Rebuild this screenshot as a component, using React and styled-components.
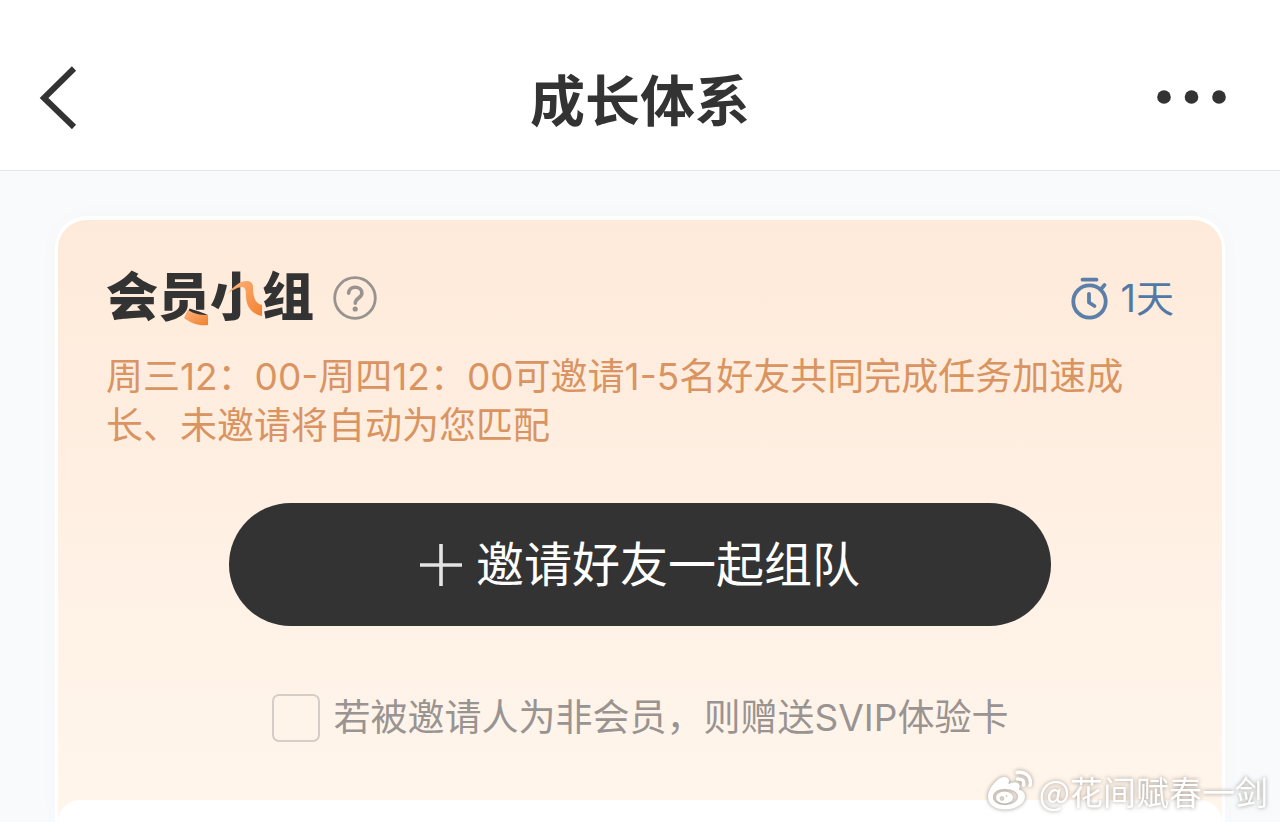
import React from "react";
import styled, { createGlobalStyle } from "styled-components";

const GlobalStyle = createGlobalStyle`
  * {
    box-sizing: border-box;
  }

  body {
    margin: 0;
    background: #f8fafc;
    font-family: Inter, "Noto Sans CJK SC", sans-serif;
    color: #333;
  }

  button {
    padding: 0;
    border: 0;
    background: none;
    color: inherit;
    font: inherit;
    cursor: pointer;
  }
`;

export default function App() {
  return (
    <Page>
      <GlobalStyle />
      <NavBar>
        <IconButton aria-label="返回">
          <svg width="40" height="64" viewBox="0 0 40 64" fill="none">
            <path d="M36 3.500 6 33l30 29" stroke="#333" strokeWidth="6" />
          </svg>
        </IconButton>
        <NavTitle>成长体系</NavTitle>
        <IconButton $end aria-label="更多">
          <svg width="72" height="16" viewBox="0 0 72 16" fill="#333">
            <circle cx="8" cy="8" r="6.8" />
            <circle cx="35.500" cy="8" r="6.8" />
            <circle cx="63" cy="8" r="6.8" />
          </svg>
        </IconButton>
      </NavBar>

      <Main>
        <Card>
          <CardBody>
            <CardHead>
              <GroupTitle>
                会员<Trimmed>小</Trimmed>组
                <TitleStrokes viewBox="0 0 208 60" aria-hidden="true">
                  <defs>
                    <linearGradient id="stroke" x1="0" y1="0" x2="1" y2="1">
                      <stop offset="0" stopColor="#ffb27c" />
                      <stop offset="1" stopColor="#f0822f" />
                    </linearGradient>
                  </defs>
                  <path fill="url(#stroke)" d="M82 42c6 4 12 5 20 5v10c-9 1-16-1-24-7z" />
                  <path fill="url(#stroke)" d="M122 25c6-7 12-12 18-12 5 0 7 2 7 7 0 10 3 16 9 17v11c-10-2-16-9-16-20 0-6-1-9-4-9-4 0-9 3-14 6z" />
                </TitleStrokes>
              </GroupTitle>
              <IconButton aria-label="规则说明">
                <svg width="44" height="44" viewBox="0 0 44 44" fill="none" stroke="#999390">
                  <circle cx="22" cy="22" r="20.3" strokeWidth="2.8" />
                  <path d="M15.600 17.200c.2-3.600 2.900-6 6.600-6s6.700 2.400 6.700 5.700c0 5-6.600 5.200-6.600 10.300" strokeWidth="3.600" strokeLinecap="round" />
                  <circle cx="22.2" cy="33" r="2.6" fill="#999390" stroke="none" />
                </svg>
              </IconButton>
              <Remaining>
                <svg width="38" height="44" viewBox="0 0 38 44" fill="none" stroke="#5b7fa8" strokeLinecap="round">
                  <circle cx="18.5" cy="25.500" r="16.2" strokeWidth="3.8" />
                  <path d="M11.500 3.700h14M30.500 12.500l3-3.500" strokeWidth="3.800" />
                  <path d="M18 18v8.500l5.500 3.500" strokeWidth="3.800" strokeLinejoin="round" />
                </svg>
                1天
              </Remaining>
            </CardHead>

            <Notice>
              周三12：00-周四12：00可邀请1-5名好友共同完成任务加速成长、未邀请将自动为您匹配
            </Notice>

            <InviteButton>
              <svg width="42" height="42" viewBox="0 0 42 42" stroke="#e4e4e4" strokeWidth="3.6">
                <path d="M21 0v42M0 21h42" />
              </svg>
              邀请好友一起组队
            </InviteButton>

            <GiftOption>
              <CheckBox id="gift" type="checkbox" />
              <label htmlFor="gift">若被邀请人为非会员，则赠送SVIP体验卡</label>
            </GiftOption>
          </CardBody>
          <NextPanel />
        </Card>
      </Main>

      <Watermark>
        <svg width="46" height="42" viewBox="0 0 46 42" fill="none">
          <path
            fill="#fff"
            fillRule="evenodd"
            d="M17 7C11 7 1 18 1 27c0 8 8 12.500 17 12.500 11 0 20-6 20-13 0-4-3-6-6-7 1-2.500 1-5-1-6.500-2.500-1.500-6-.5-9.500 1C23 9 21 7 17 7zM18 19c7.500 0 13 3 13 7.500S25.500 35 18 35 6 31.500 6 27s4.500-8 12-8z"
          />
          <ellipse cx="17.500" cy="27.500" rx="8.500" ry="6" fill="#fff" />
          <circle cx="15" cy="28.500" r="2.400" fill="#d6cdc6" />
          <circle cx="19.500" cy="26" r="1" fill="#d6cdc6" />
          <path d="M30 2.500c9-1.500 15 5 13 13M30.500 9c4.500-.5 7 2 6 6" stroke="#fff" strokeWidth="3.400" strokeLinecap="round" />
        </svg>
        @花间赋春一剑
      </Watermark>
    </Page>
  );
}

const Page = styled.div`
  position: relative;
  display: flex;
  flex-direction: column;
  min-height: 100vh;
`;

const NavBar = styled.header`
  display: grid;
  grid-template-columns: 1fr auto 1fr;
  align-items: center;
  padding: 24px 38px 0;
  height: 171px;
  background: #fff;
  border-bottom: 1px solid #e2e4e6;
`;

const NavTitle = styled.h1`
  margin: 0;
  font-family: "Noto Sans CJK SC", sans-serif;
  font-size: 55px;
  line-height: 80px;
  font-weight: 700;
`;

const IconButton = styled.button`
  display: flex;
  justify-self: ${props => (props.$end ? "end" : "start")};
  margin-right: ${props => (props.$end ? "14px" : "0")};
`;

const Main = styled.main`
  flex: 1;
  display: flex;
  padding: 45px 55px 0;
`;

const Card = styled.section`
  flex: 1;
  display: flex;
  flex-direction: column;
  border: 3px solid #fff;
  border-top-width: 4px;
  border-bottom: 0;
  border-radius: 32px 32px 0 0;
  background: linear-gradient(#feeada, #fff5eb 560px);
  box-shadow: 0 0 24px rgba(60, 70, 90, 0.02);
`;

const CardBody = styled.div`
  display: flex;
  flex-direction: column;
  padding: 48px 48px 58px;
`;

const CardHead = styled.div`
  display: flex;
  align-items: center;
  gap: 19px;
  height: 60px;
`;

const GroupTitle = styled.h2`
  position: relative;
  display: flex;
  margin: 0;
  font-size: 52px;
  line-height: 60px;
  font-weight: 900;
`;

/* leaves the right stroke out, TitleStrokes draws it in orange */
const Trimmed = styled.span`
  color: transparent;
  background: linear-gradient(90deg, #333 64%, transparent 64%);
  background-clip: text;
`;

const TitleStrokes = styled.svg`
  position: absolute;
  inset: 0;
  width: 100%;
  height: 100%;
`;

const Remaining = styled.span`
  display: flex;
  align-items: center;
  gap: 12px;
  margin-left: auto;
  color: #5079a6;
  font-size: 38px;
  line-height: 60px;
`;

const Notice = styled.p`
  margin: 24px 0 0;
  padding-right: 24px;
  color: #d99461;
  font-size: 37px;
  line-height: 49px;
`;

const InviteButton = styled.button`
  && {
    display: flex;
    align-items: center;
    justify-content: center;
    gap: 14px;
    align-self: center;
    width: 77%;
    height: 123px;
    margin-top: 53px;
    border-radius: 62px;
    background: #333;
    color: #fff;
    font-size: 48px;
    line-height: 60px;
  }
`;

const GiftOption = styled.div`
  display: flex;
  align-items: center;
  justify-content: center;
  gap: 14px;
  margin-top: 68px;
  color: #999492;
  font-size: 37px;
  line-height: 48px;
`;

const CheckBox = styled.input`
  appearance: none;
  width: 48px;
  height: 48px;
  margin: 0;
  border: 2px solid #d5cdc8;
  border-radius: 7px;

  &:checked {
    background: #333;
  }
`;

const NextPanel = styled.div`
  flex: 1;
  min-height: 22px;
  border-radius: 28px 28px 0 0;
  background: #fff;
`;

const Watermark = styled.div`
  position: absolute;
  right: 12px;
  bottom: 10px;
  display: flex;
  align-items: center;
  gap: 6px;
  color: #fff;
  font-family: "Noto Sans CJK SC", sans-serif;
  font-size: 33px;
  line-height: 42px;
  filter: drop-shadow(0 0 2px rgba(90, 80, 70, 0.6));
`;
